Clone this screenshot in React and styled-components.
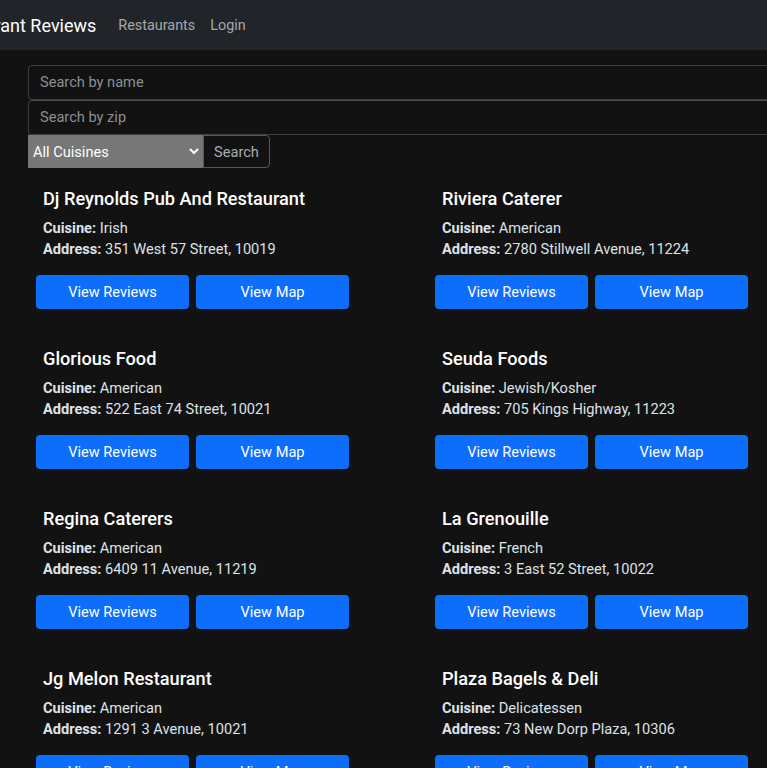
import React from 'react'
import styled, {createGlobalStyle} from 'styled-components'

const GlobalStyle = createGlobalStyle`
  html, body {
    margin: 0;
    padding: 0;
    background: #121212;
    font-family: Roboto, "Liberation Sans", sans-serif;
    color: #dee2e6;
    overflow: hidden;
  }
  * { box-sizing: border-box; }
`

const restaurants = [
  {name: 'Dj Reynolds Pub And Restaurant', cuisine: 'Irish', address: '351 West 57 Street, 10019'},
  {name: 'Riviera Caterer', cuisine: 'American', address: '2780 Stillwell Avenue, 11224'},
  {name: 'Glorious Food', cuisine: 'American', address: '522 East 74 Street, 10021'},
  {name: 'Seuda Foods', cuisine: 'Jewish/Kosher', address: '705 Kings Highway, 11223'},
  {name: 'Regina Caterers', cuisine: 'American', address: '6409 11 Avenue, 11219'},
  {name: 'La Grenouille', cuisine: 'French', address: '3 East 52 Street, 10022'},
  {name: 'Jg Melon Restaurant', cuisine: 'American', address: '1291 3 Avenue, 10021'},
  {name: 'Plaza Bagels & Deli', cuisine: 'Delicatessen', address: '73 New Dorp Plaza, 10306'},
]

export default function App() {
  return (
    <Page>
      <GlobalStyle />
      <Navbar>
        <Brand>Restaurant Reviews</Brand>
        <NavLink>Restaurants</NavLink>
        <NavLink>Login</NavLink>
      </Navbar>
      <Main>
        <SearchForm>
          <TextInput placeholder="Search by name" />
          <TextInput placeholder="Search by zip" />
          <InputGroup>
            <CuisineSelect defaultValue="All Cuisines">
              <option>All Cuisines</option>
            </CuisineSelect>
            <SearchButton>Search</SearchButton>
          </InputGroup>
        </SearchForm>
        <Grid>
          {restaurants.map(r => (
            <Card key={r.name}>
              <Title>{r.name}</Title>
              <Line><b>Cuisine:</b> {r.cuisine}</Line>
              <Line><b>Address:</b> {r.address}</Line>
              <Buttons>
                <BlueButton>View Reviews</BlueButton>
                <BlueButton>View Map</BlueButton>
              </Buttons>
            </Card>
          ))}
        </Grid>
      </Main>
    </Page>
  )
}

const Page = styled.div`
  width: 767px;
  height: 768px;
  overflow: hidden;
`

const Navbar = styled.nav`
  height: 50px;
  background: #212529;
  display: flex;
  align-items: center;
  gap: 22px;
`

const Brand = styled.span`
  margin-left: -61px;
  font-size: 18px;
  color: #fff;
  white-space: nowrap;
`

const NavLink = styled.a`
  font-size: 14.4px;
  color: rgba(255, 255, 255, 0.6);
  margin-right: -7px;
  cursor: pointer;
`

const Main = styled.main`
  padding: 15px 0 0 28px;
`

const SearchForm = styled.div`
  display: flex;
  flex-direction: column;
  margin-right: -30px;
`

const TextInput = styled.input`
  height: 35px;
  background: #121212;
  border: 1px solid #3d3f42;
  border-radius: 4px;
  padding: 0 11px 2px;
  font-family: inherit;
  font-size: 14.6px;
  color: #dee2e6;
  &::placeholder { color: #8b8f94; }
  & + & { border-top-color: #4a4c4f; }
`

const InputGroup = styled.div`
  display: flex;
`

const CuisineSelect = styled.select`
  width: 175px;
  height: 33px;
  background: #777;
  color: #fff;
  border: 1px solid #777;
  font-family: inherit;
  font-size: 14.6px;
  padding: 0;
`

const SearchButton = styled.button`
  width: 67px;
  height: 33px;
  background: #121212;
  color: #a9adb1;
  border: 1px solid #55585c;
  border-radius: 0 4px 4px 0;
  font-family: inherit;
  font-size: 14.6px;
`

const Grid = styled.div`
  display: grid;
  grid-template-columns: 399px 399px;
`

const Card = styled.div`
  height: 160px;
  padding: 20px 0 0 8px;
`

const Title = styled.div`
  font-size: 18.2px;
  font-weight: 500;
  color: #fff;
  padding-left: 7px;
  line-height: 22px;
  margin-bottom: 8px;
`

const Line = styled.div`
  font-size: 14.6px;
  line-height: 21px;
  padding-left: 7px;
  color: #dee2e6;
  b { font-weight: 700; }
`

const Buttons = styled.div`
  display: flex;
  gap: 7px;
  margin-top: 15px;
`

const BlueButton = styled.button`
  width: 153px;
  height: 34px;
  background: #0d6efd;
  color: #fff;
  border: none;
  border-radius: 4px;
  font-family: inherit;
  font-size: 14.6px;
`
